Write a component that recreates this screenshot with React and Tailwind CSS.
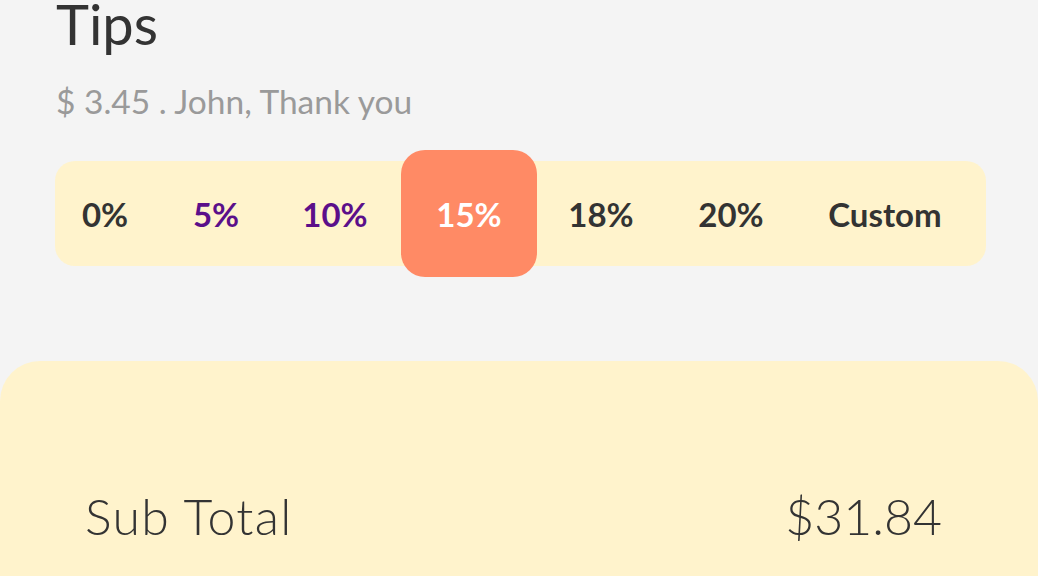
import React, { useState } from 'react';

const tips = [
    { label: '0%', cell: 'w-[100px]', color: 'text-[#333333]' },
    { label: '5%', cell: 'w-[122px]', color: 'text-[#5b0f8a]' },
    { label: '10%', cell: 'w-[124px] pr-[8px]', color: 'text-[#5b0f8a]' },
    { label: '15%', cell: 'w-[136px]', color: 'text-[#333333]' },
    { label: '18%', cell: 'w-[128px]', color: 'text-[#333333]' },
    { label: '20%', cell: 'w-[132px]', color: 'text-[#333333]' },
    { label: 'Custom', cell: 'w-[176px]', color: 'text-[#333333]' },
];

export default function App() {
    const [selected, setSelected] = useState('15%');

    return (
        <div className="w-[1038px] h-[576px] overflow-hidden bg-[#f4f4f4] flex flex-col" style={{ fontFamily: 'Lato, "Noto Sans", sans-serif' }}>
            {/* Header */}
            <div className="pl-[56px]">
                <h1 className="text-[56px] leading-[47px] text-[#333333] font-normal">Tips</h1>
                <p className="mt-[38px] text-[33.5px] leading-none text-[#9a9a9a]">$ 3.45 . John, Thank you</p>
            </div>

            {/* Tip selector */}
            <div className="ml-[55px] mt-[42px] w-[931px] h-[105px] shrink-0 rounded-[20px] bg-[#fff3cc] flex items-center">
                {tips.map((t) => {
                    const active = t.label === selected;
                    return (
                        <button
                            key={t.label}
                            type="button"
                            onClick={() => setSelected(t.label)}
                            className={`${t.cell} shrink-0 flex items-center justify-center text-[33px] font-bold leading-none ${
                                active ? 'h-[127px] rounded-[24px] bg-[#ff8a65] text-white' : `h-full ${t.color}`
                            }`}
                        >
                            <span className="pt-[3px]">{t.label}</span>
                        </button>
                    );
                })}
            </div>

            {/* Totals card */}
            <div className="mt-[95px] flex-1 rounded-t-[40px] bg-[#fff3cc] pt-[130px] pl-[85px] pr-[96px]">
                <div className="flex items-start justify-between text-[50px] leading-none font-light text-[#333333]">
                    <span className="tracking-[1.3px]">Sub Total</span>
                    <span>$31.84</span>
                </div>
            </div>
        </div>
    );
}
